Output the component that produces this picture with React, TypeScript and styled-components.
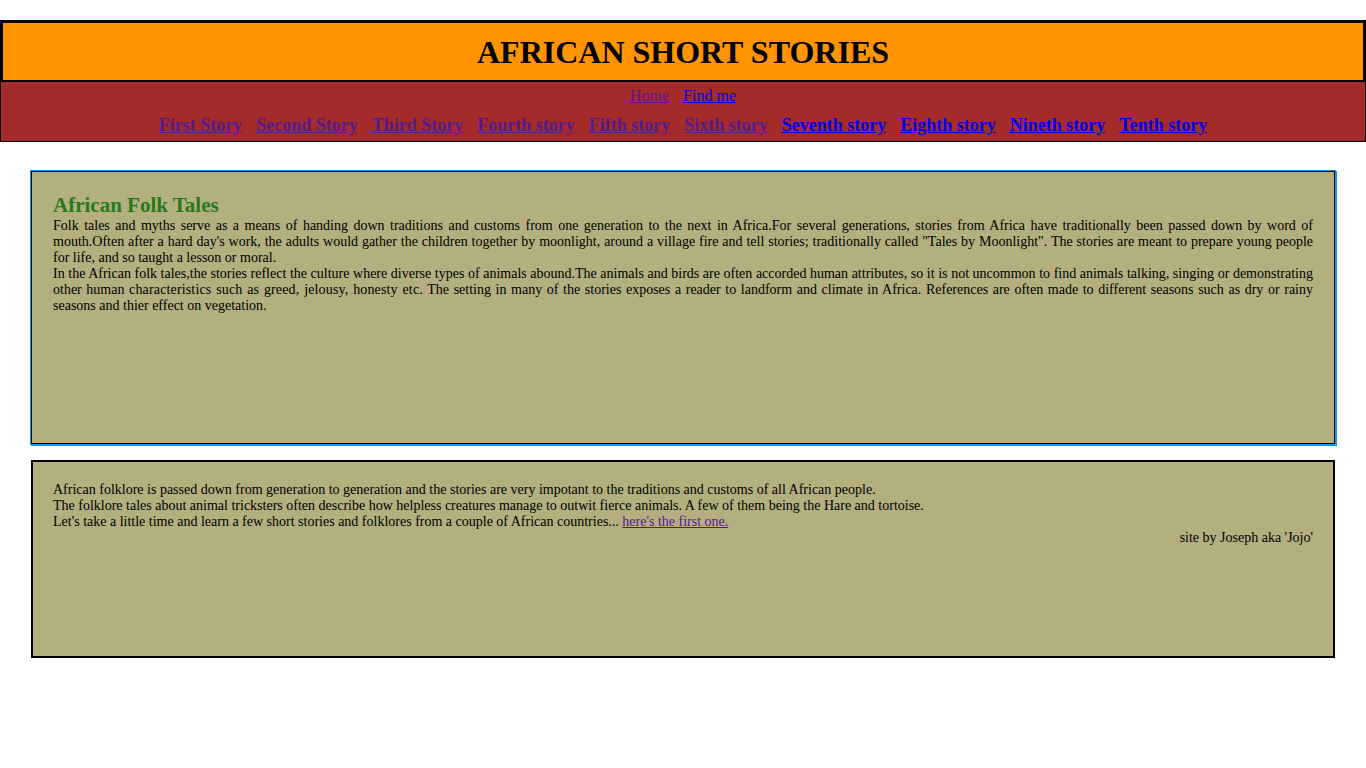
import React from "react";
import styled, { createGlobalStyle } from "styled-components";

const Global = createGlobalStyle`
  html, body { margin: 0; padding: 0; background: #fff; }
  body { font-family: "Liberation Serif", "Times New Roman", serif; color: #000; }
`;

const Header = styled.header`
  margin-top: 20px;
  background: #ff9400;
  border: 3px solid #000;
  border-bottom-width: 2px;
  height: 57px;
  display: flex;
  align-items: center;
  justify-content: center;
`;

const Title = styled.h1`
  margin: 0;
  font-size: 32px;
  font-weight: bold;
  line-height: 36px;
`;

const Nav = styled.nav`
  background: #a52a2a;
  border: 1px solid #000;
  border-top: none;
  height: 60px;
  display: flex;
  flex-direction: column;
  align-items: center;
  padding-top: 5px;
  box-sizing: border-box;
`;

const Row = styled.div<{ $big?: boolean }>`
  display: flex;
  gap: 14px;
  font-size: ${(p) => (p.$big ? "18px" : "16px")};
  font-weight: ${(p) => (p.$big ? "bold" : "normal")};
  line-height: ${(p) => (p.$big ? "21px" : "18px")};
  margin-top: ${(p) => (p.$big ? "10px" : "0")};
`;

const Link = styled.a<{ $visited?: boolean }>`
  color: ${(p) => (p.$visited ? "#551a8b" : "#0000ee")};
  text-decoration: underline;
`;

const Main = styled.main`
  padding: 29px 31px 0;
  display: flex;
  flex-direction: column;
  gap: 16px;
`;

const Box = styled.section<{ $h: number; $outlined?: boolean }>`
  background: #b4af7e;
  border: ${(p) => (p.$outlined ? "1px" : "2px")} solid #000;
  ${(p) => (p.$outlined ? "box-shadow: 0 0 0 1px #0a9cf5, 1px 1px 0 1px #0a9cf5;" : "")}
  height: ${(p) => p.$h}px;
  box-sizing: border-box;
  padding: ${(p) => (p.$outlined ? "21px 21px" : "20px 20px")};
  font-size: 14px;
  line-height: 16px;
`;

const Heading = styled.h2`
  margin: 0;
  color: #267a1c;
  font-size: 21px;
  line-height: 25px;
  font-weight: bold;
`;

const Para = styled.p`
  margin: 0;
  text-align: justify;
`;

const Loose = styled.span`
  letter-spacing: 0.15px;
`;

const Plain = styled.p`
  margin: 0;
`;

const Credit = styled.p`
  margin: 0;
  text-align: right;
`;

const stories: [string, boolean][] = [
  ["First Story", true],
  ["Second Story", true],
  ["Third Story", true],
  ["Fourth story", true],
  ["Fifth story", true],
  ["Sixth story", true],
  ["Seventh story", false],
  ["Eighth story", false],
  ["Nineth story", false],
  ["Tenth story", false],
];

export default function App() {
  return (
    <>
      <Global />
      <Header>
        <Title>AFRICAN SHORT STORIES</Title>
      </Header>
      <Nav>
        <Row>
          <Link href="#" $visited>Home</Link>
          <Link href="#">Find me</Link>
        </Row>
        <Row $big>
          {stories.map(([s, v]) => (
            <Link key={s} href="#" $visited={v}>{s}</Link>
          ))}
        </Row>
      </Nav>
      <Main>
        <Box $h={273} $outlined>
          <Heading>African Folk Tales</Heading>
          <Para>
            Folk tales and myths serve as a means of handing down traditions and customs from one generation to the next in Africa.For several generations, stories from Africa have traditionally been passed down by word of mouth.Often after a hard day's work, the adults would gather the children together by moonlight, around a village fire and tell stories; traditionally called "Tales by Moonlight". The stories are meant to prepare young people for life, and so taught a lesson or moral.
          </Para>
          <Para>
            In the African folk tales,the stories reflect the culture where diverse types of animals abound.The animals and birds are often accorded human attributes, so it is not uncommon to find animals talking, singing or demonstrating other human <Loose>characteristics such as greed, jelousy, honesty etc.</Loose> The setting in many of the stories exposes a reader to landform and climate in Africa. References are often made to different seasons such as dry or rainy seasons and thier effect on vegetation.
          </Para>
        </Box>
        <Box $h={198}>
          <Plain>African folklore is passed down from generation to generation and the stories are very impotant to the traditions and customs of all African people.</Plain>
          <Plain>The folklore tales about animal tricksters often describe how helpless creatures manage to outwit fierce animals. A few of them being the Hare and tortoise.</Plain>
          <Plain>
            Let's take a little time and learn a few short stories and folklores from a couple of African countries... <Link href="#" $visited>here's the first one.</Link>
          </Plain>
          <Credit>site by Joseph aka 'Jojo'</Credit>
        </Box>
      </Main>
    </>
  );
}
